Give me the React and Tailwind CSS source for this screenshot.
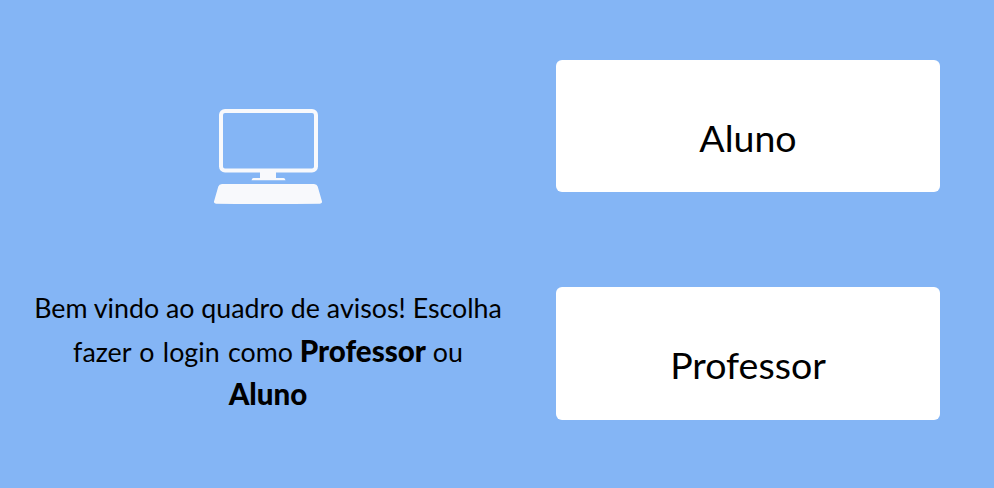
const font = { fontFamily: 'Lato, "Noto Sans", sans-serif' };

function DesktopIcon() {
  return (
    <svg width="110" height="96" viewBox="0 0 110 96" fill="#f8f9fc">
      <rect x="8" y="2" width="95" height="59.500" rx="4" fill="none" stroke="#f8f9fc" strokeWidth="4" />
      <path d="M47 62h16v7h7.500q1.500 0 2 2.300H38.500q.500-2.300 2-2.300H47z" />
      <path d="M9 75h92q3 0 3.700 2.500l4.300 15q.500 2-2 2.200-52 .800-104 0-2.500-.200-2-2.200L5.300 77.500Q6 75 9 75z" />
    </svg>
  );
}

export default function App() {
  return (
    <div className="flex h-[488px] w-[994px] bg-[#84b5f5] pt-[60px]" style={font}>
      <div className="w-[536px] flex flex-col items-center">
        <div className="mt-[49px]">
          <DesktopIcon />
        </div>
        <p className="mt-[82px] w-[472px] text-center text-[26.800px] leading-[43.500px] text-black">
          Bem vindo ao quadro de avisos! Escolha <span className="[word-spacing:1.500px]">fazer o login como</span>{' '}
          <b className="text-[29.500px] leading-none font-black">Professor</b> ou
          <b className="-mt-[1px] block text-[29.500px] leading-[41px] font-black">Aluno</b>
        </p>
      </div>
      <div className="ml-[20px] flex flex-col gap-[95px]">
        <button className="h-[132px] w-[384px] rounded-md bg-white pt-[25px] text-[37.500px] text-black" style={font}>
          Aluno
        </button>
        <button className="h-[133px] w-[384px] rounded-md bg-white pt-[23px] text-[37.500px] text-black" style={font}>
          Professor
        </button>
      </div>
    </div>
  );
}
